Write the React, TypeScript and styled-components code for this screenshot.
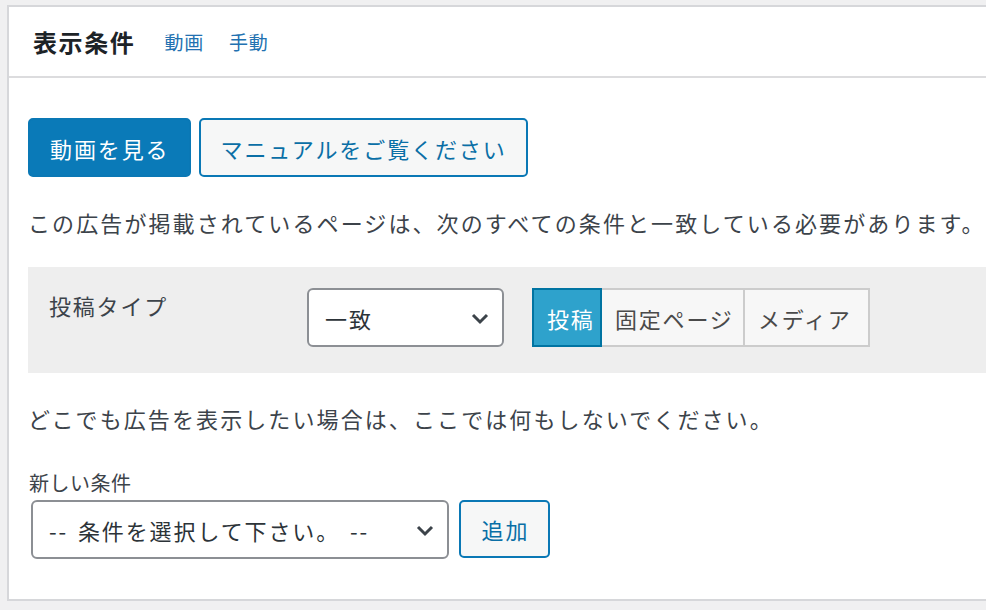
import React from "react";
import styled, { createGlobalStyle } from "styled-components";

const Global = createGlobalStyle`
  html, body { margin: 0; padding: 0; background: #f0f0f1; overflow: hidden; }
  body { font-family: "Noto Sans CJK JP", "Noto Sans", sans-serif; color: #3c434a; }
  * { box-sizing: border-box; }
`;

const Page = styled.div`
  padding: 5px 0 0 7px;
  width: 986px;
  height: 610px;
`;

const Panel = styled.section`
  width: 1010px;
  background: #fff;
  border: 2px solid #d6d7da;
`;

const Header = styled.header`
  height: 71px;
  display: flex;
  align-items: center;
  gap: 25px;
  padding-left: 24px;
  border-bottom: 2px solid #dcdcde;
`;

const Title = styled.h2`
  margin: 0 4px 0 0;
  font-size: 24px;
  font-weight: 700;
  color: #1d2327;
  letter-spacing: 1.6px;
`;

const HeaderLink = styled.a`
  font-size: 19px;
  color: #2271b1;
  text-decoration: none;
  letter-spacing: 0.8px;
`;

const Body = styled.div`
  padding: 40px 0 40px 19px;
`;

const ButtonRow = styled.div`
  display: flex;
  gap: 8px;
`;

const Button = styled.button<{ $primary?: boolean }>`
  height: 59px;
  padding: 0 19px 0 20px;
  border-radius: 5px;
  font-family: inherit;
  font-size: 22px;
  letter-spacing: 1.9px;
  border: 2px solid #0a78b5;
  background: ${(p) => (p.$primary ? "#0a7ab8" : "#f6f7f7")};
  color: ${(p) => (p.$primary ? "#fff" : "#0a6fa6")};
  cursor: pointer;
`;

const Text = styled.p<{ $top: number }>`
  margin: ${(p) => p.$top}px 0 0;
  font-size: 22px;
  line-height: 34px;
  letter-spacing: 2.1px;
  color: #3c434a;
  white-space: nowrap;
`;

const ConditionRow = styled.div`
  margin-top: 28px;
  background: #eeeeee;
  height: 106px;
  display: flex;
  align-items: flex-start;
  padding: 21px 0 0 21px;
`;

const RowLabel = styled.div`
  width: 258px;
  font-size: 22px;
  line-height: 34px;
  letter-spacing: 1.8px;
  color: #3c434a;
`;

const Select = styled.div<{ $width: number }>`
  width: ${(p) => p.$width}px;
  height: 59px;
  background: #fff;
  border: 2px solid #8c8f94;
  border-radius: 6px;
  display: flex;
  align-items: center;
  justify-content: space-between;
  padding: 0 12px 0 16px;
  font-size: 22px;
  color: #2c3338;
  letter-spacing: 1.9px;
  word-spacing: 3px;
  white-space: pre;
`;

const Chevron = () => (
  <svg width="20" height="14" viewBox="0 0 20 14">
    <path d="M3 4 L10 11 L17 4" fill="none" stroke="#3c434a" strokeWidth="3" />
  </svg>
);

const Group = styled.div`
  margin-left: 28px;
  display: flex;
  height: 59px;
`;

const GroupItem = styled.div<{ $active?: boolean; $width: number }>`
  width: ${(p) => p.$width}px;
  height: 59px;
  display: flex;
  align-items: center;
  padding-left: 13px;
  font-size: 22px;
  letter-spacing: 1.8px;
  white-space: nowrap;
  border: 2px solid ${(p) => (p.$active ? "#0074a2" : "#cccccc")};
  margin-left: ${(p) => (p.$active ? "0" : "-2px")};
  background: ${(p) => (p.$active ? "#2ea2cc" : "#f7f7f7")};
  color: ${(p) => (p.$active ? "#fff" : "#4a4a4a")};
  position: relative;
  z-index: ${(p) => (p.$active ? 1 : 0)};
`;

const NewLabel = styled.div`
  margin-top: 33px;
  padding-left: 1px;
  font-size: 20px;
  line-height: 30px;
  letter-spacing: 0.5px;
  color: #3c434a;
`;

const AddRow = styled.div`
  display: flex;
  gap: 10px;
  margin-top: 2px;
  padding-left: 3px;
`;

const AddButton = styled.button`
  width: 91px;
  height: 58px;
  border-radius: 5px;
  border: 2px solid #0a78b5;
  background: #f6f7f7;
  color: #0a6fa6;
  font-family: inherit;
  font-size: 22px;
  letter-spacing: 2px;
  padding: 0 0 0 2px;
`;

export default function App() {
  return (
    <>
      <Global />
      <Page>
        <Panel>
          <Header>
            <Title>表示条件</Title>
            <HeaderLink href="#">動画</HeaderLink>
            <HeaderLink href="#">手動</HeaderLink>
          </Header>
          <Body>
            <ButtonRow>
              <Button $primary>動画を見る</Button>
              <Button>マニュアルをご覧ください</Button>
            </ButtonRow>
            <Text $top={28}>
              この広告が掲載されているページは、次のすべての条件と一致している必要があります。
            </Text>
            <ConditionRow>
              <RowLabel>投稿タイプ</RowLabel>
              <Select $width={197}>
                <span>一致</span>
                <Chevron />
              </Select>
              <Group>
                <GroupItem $active $width={70}>投稿</GroupItem>
                <GroupItem $width={145}>固定ページ</GroupItem>
                <GroupItem $width={127}>メディア</GroupItem>
              </Group>
            </ConditionRow>
            <Text $top={28}>どこでも広告を表示したい場合は、ここでは何もしないでください。</Text>
            <NewLabel>新しい条件</NewLabel>
            <AddRow>
              <Select $width={418}>
                <span>-- 条件を選択して下さい。 --</span>
                <Chevron />
              </Select>
              <AddButton>追加</AddButton>
            </AddRow>
          </Body>
        </Panel>
      </Page>
    </>
  );
}
